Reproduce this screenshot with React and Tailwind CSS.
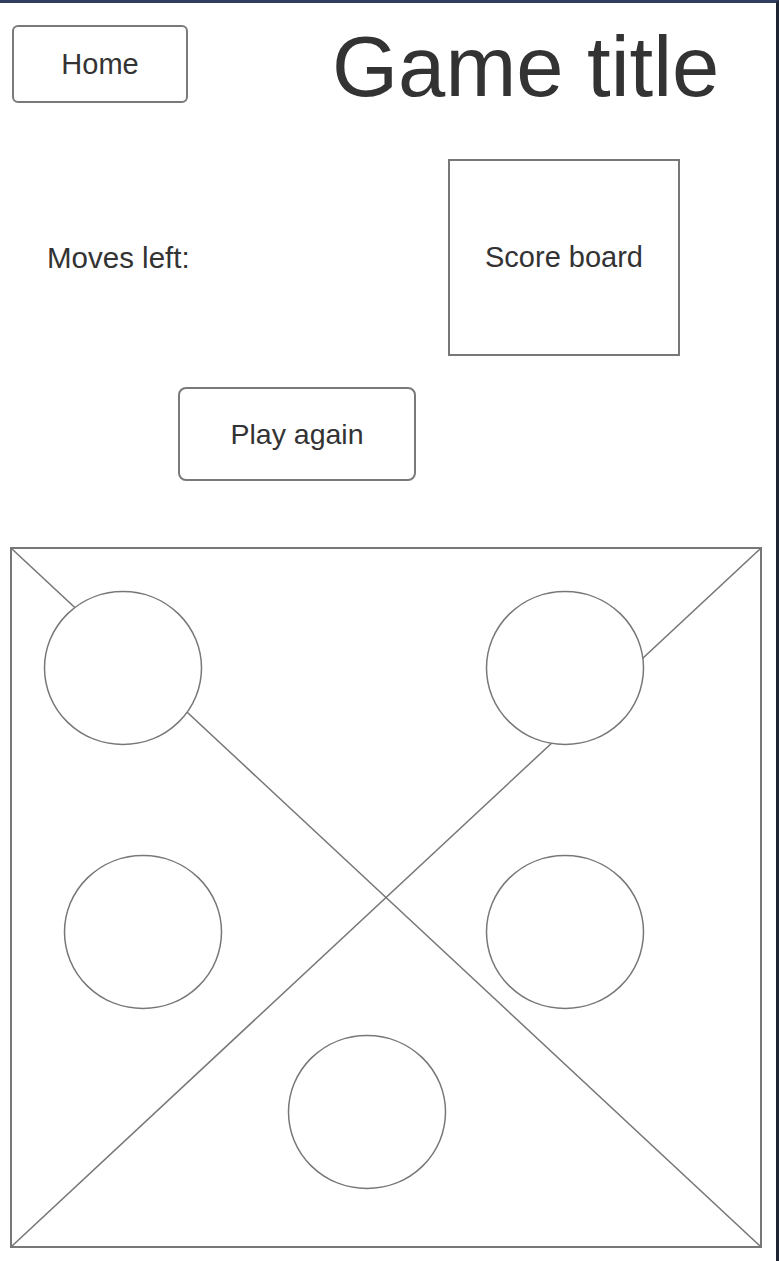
export default function App() {
  const circles = [
    [111, 119],
    [553, 119],
    [131, 383],
    [553, 383],
    [355, 563],
  ];
  return (
    <div
      className="w-[779px] h-[1261px] bg-white border-t-[3px] border-r-[3px] border-t-[#2f3e5c] border-r-[#1e2431] text-[#333] overflow-hidden"
      style={{ fontFamily: '"Liberation Sans", Arial, sans-serif' }}
    >
      <div className="flex items-start pt-[22px] h-[100px]">
        <button className="ml-[12px] w-[176px] h-[78px] border-2 border-[#7a7a7a] rounded-[6px] text-[29px] text-[#333] flex items-center justify-center pt-[2px]">
          Home
        </button>
        <h1 className="ml-[144px] mt-[-1px] text-[85px] leading-none font-normal">Game title</h1>
      </div>

      <div className="flex items-center mt-[56px]">
        <div className="ml-[47px] w-[401px] text-[29.5px] leading-none">Moves left:</div>
        <div className="w-[232px] h-[197px] border-2 border-[#777] flex items-center justify-center text-[29px]">
          Score board
        </div>
      </div>

      <button className="mt-[31px] ml-[178px] w-[238px] h-[94px] border-2 border-[#7a7a7a] rounded-[8px] text-[28.5px] text-[#333] flex items-center justify-center">
        Play again
      </button>

      <div className="mt-[66px] ml-[10px] w-[752px] h-[701px] border-2 border-[#777]">
        <svg className="block w-full h-full" viewBox="0 0 748 697">
          <line x1="0" y1="0" x2="748" y2="697" stroke="#777" strokeWidth="1.5" />
          <line x1="748" y1="0" x2="0" y2="697" stroke="#777" strokeWidth="1.5" />
          {circles.map(([cx, cy], i) => (
            <ellipse key={i} cx={cx} cy={cy} rx="78.5" ry="76.5" fill="white" stroke="#777" strokeWidth="1.5" />
          ))}
        </svg>
      </div>
    </div>
  );
}
